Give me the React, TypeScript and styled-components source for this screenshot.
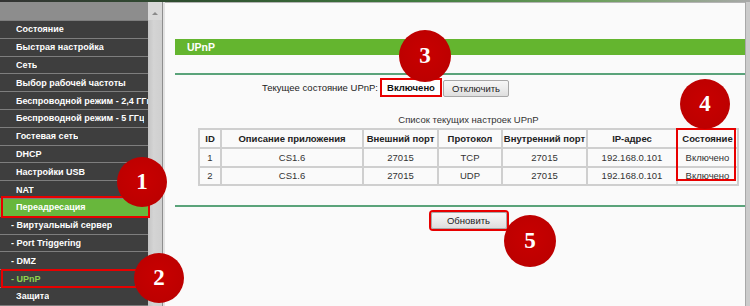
import React from "react";
import styled, { createGlobalStyle } from "styled-components";

const SANS = `"Liberation Sans", Arial, sans-serif`;
const SERIF = `"Liberation Serif", "Times New Roman", serif`;

const GlobalStyle = createGlobalStyle`
  html, body { margin: 0; padding: 0; background: #ffffff; }
  body { font-family: ${SANS}; }
  * { box-sizing: border-box; }
`;

const Page = styled.div`
  position: relative;
  width: 750px;
  height: 306px;
  overflow: hidden;
  display: flex;
  flex-direction: column;
  background: #fafafa;
`;

const TopStripe = styled.div`
  height: 2px;
  flex: none;
  background: linear-gradient(90deg, #333333 0%, #2f4f30 25%, #3f7a3e 55%, #6ea05f 80%, #a8a8a8 100%);
`;

const Body = styled.div`
  flex: 1;
  display: flex;
  min-height: 0;
`;

const Sidebar = styled.nav`
  width: 148px;
  flex: none;
  display: flex;
  flex-direction: column;
  background: #7c7c7c;
`;

const MenuHeader = styled.div`
  height: 18px;
  flex: none;
  background: #8d8d8d;
`;

const MenuItem = styled.div<{ $sub?: boolean; $active?: boolean; $current?: boolean; $mark?: "wide" | "narrow" }>`
  position: relative;
  height: 17.8px;
  flex: none;
  border-top: 1px solid #7e7e7e;
  display: flex;
  align-items: center;
  padding-left: ${(p) => (p.$sub ? "11px" : "16px")};
  background: ${(p) => (p.$active ? "#68b73c" : "#3e3e3e")};
  color: ${(p) => (p.$current ? "#8fd24c" : "#ffffff")};
  font: bold 9px ${SANS};
  white-space: nowrap;
  overflow: visible;

  &::after {
    content: "";
    display: ${(p) => (p.$mark ? "block" : "none")};
    position: absolute;
    left: 1px;
    right: ${(p) => (p.$mark === "wide" ? "-2px" : "11px")};
    top: ${(p) => (p.$mark === "wide" ? "-3px" : "-1px")};
    bottom: ${(p) => (p.$mark === "wide" ? "-2px" : "-1px")};
    border: 2px solid #e80000;
    z-index: 2;
  }
`;

const MenuLabel = styled.span`
  display: block;
  overflow: hidden;
  max-width: 132px;
`;

const ScrollTrack = styled.div`
  width: 14px;
  flex: none;
  background: linear-gradient(90deg, #c4c4c4 0%, #d4d4d4 40%, #cfcfcf 100%);
  display: flex;
  flex-direction: column;
`;

const ScrollButton = styled.div`
  height: 18px;
  display: flex;
  justify-content: center;
  padding-top: 10px;
  background: #d9d9d9;
  &::before {
    content: "";
    width: 0;
    height: 0;
    border-left: 3px solid transparent;
    border-right: 3px solid transparent;
    border-bottom: 3px solid #8a8a8a;
  }
`;

const Divider = styled.div`
  width: 3px;
  flex: none;
  border-left: 1px solid #8e8e8e;
  background: #e2e2e2;
`;

const Content = styled.main`
  flex: 1;
  min-width: 0;
  border-top: 1px solid #b4b4b4;
  padding-left: 10px;
  display: flex;
  flex-direction: column;
  background: #fafafa;
  color: #2a2a2a;
  font: 9.5px ${SANS};
`;

const RightEdge = styled.div`
  width: 5px;
  flex: none;
  border-left: 1px solid #a8a8a8;
  background: #cbcbcb;
`;

const TitleBar = styled.h1`
  margin: 36px 0 0;
  height: 16px;
  background: #64b52f;
  color: #ffffff;
  font: bold 10.5px ${SANS};
  line-height: 16px;
  padding-left: 12px;
`;

const Rule = styled.hr<{ $gap: number }>`
  margin: ${(p) => p.$gap}px 0 0;
  height: 2px;
  border: none;
  background: #5aa37a;
`;

const StatusRow = styled.div`
  margin-top: 3px;
  height: 19px;
  display: flex;
  align-items: center;
`;

const StatusLabel = styled.span`
  width: 203px;
  text-align: right;
  color: #222;
`;

const StatusValue = styled.span`
  margin-left: 2px;
  width: 62px;
  height: 19px;
  border: 2px solid #e80000;
  background: #ffffff;
  display: flex;
  align-items: center;
  justify-content: center;
  font-weight: bold;
  color: #111;
`;

const Button = styled.button<{ $w: number; $mark?: boolean }>`
  width: ${(p) => p.$w}px;
  height: 17px;
  padding: 0;
  margin: 0;
  border: 1px solid #a7a7a7;
  border-radius: 2px;
  background: linear-gradient(180deg, #f7f7f7 0%, #ececec 50%, #dedede 100%);
  font: 9.5px ${SANS};
  color: #222;
  box-shadow: ${(p) => (p.$mark ? "0 0 0 2px #e80000" : "none")};
`;

const StatusButtonSlot = styled.div`
  margin-left: 1px;
  padding-top: 2px;
  display: flex;
`;

const TableArea = styled.section`
  padding-left: 17px;
  display: flex;
  flex-direction: column;
  align-items: center;
`;

const Caption = styled.div`
  margin-top: 17px;
  height: 12px;
  line-height: 12px;
  color: #333;
`;

const TableWrap = styled.div`
  position: relative;
  margin-top: 2px;
`;

const Table = styled.table`
  width: 539px;
  table-layout: fixed;
  border-collapse: collapse;
  border: 2px solid #cfcfcf;
  font: 9.5px ${SANS};
  color: #333;
`;

const HeadCell = styled.th`
  height: 19px;
  padding: 0;
  border: 2px solid #cfcfcf;
  font-weight: bold;
  text-align: center;
  color: #222;
`;

const Cell = styled.td`
  height: 18.5px;
  padding: 0;
  border: 2px solid #cfcfcf;
  text-align: center;
`;

const ColumnMark = styled.div`
  position: absolute;
  left: 478px;
  top: 0;
  width: 60px;
  height: 53px;
  border: 2px solid #e80000;
  pointer-events: none;
`;

const RefreshRow = styled.div`
  margin-top: 5px;
  display: flex;
  justify-content: center;
  padding-left: 17px;
`;

const Badge = styled.div<{ $x: number; $y: number; $r: number }>`
  position: absolute;
  left: ${(p) => p.$x - p.$r}px;
  top: ${(p) => p.$y - p.$r}px;
  width: ${(p) => p.$r * 2}px;
  height: ${(p) => p.$r * 2}px;
  border-radius: 50%;
  background: radial-gradient(circle at 50% 45%, #c80000 0%, #bd0000 70%, #a80000 100%);
  color: #ffffff;
  font: bold 23px ${SERIF};
  display: flex;
  align-items: center;
  justify-content: center;
  z-index: 5;
`;

type Item = { label: string; sub?: boolean; active?: boolean; current?: boolean; mark?: "wide" | "narrow" };

const menu: Item[] = [
  { label: "Состояние" },
  { label: "Быстрая настройка" },
  { label: "Сеть" },
  { label: "Выбор рабочей частоты" },
  { label: "Беспроводной режим - 2,4 ГГц" },
  { label: "Беспроводной режим - 5 ГГц" },
  { label: "Гостевая сеть" },
  { label: "DHCP" },
  { label: "Настройки USB" },
  { label: "NAT" },
  { label: "Переадресация", active: true, mark: "wide" },
  { label: "- Виртуальный сервер", sub: true },
  { label: "- Port Triggering", sub: true },
  { label: "- DMZ", sub: true },
  { label: "- UPnP", sub: true, current: true, mark: "narrow" },
  { label: "Защита" },
];

const columns: { title: string; width: number }[] = [
  { title: "ID", width: 22 },
  { title: "Описание приложения", width: 142 },
  { title: "Внешний порт", width: 75 },
  { title: "Протокол", width: 64 },
  { title: "Внутренний порт", width: 85 },
  { title: "IP-адрес", width: 90 },
  { title: "Состояние", width: 61 },
];

const rows = [
  ["1", "CS1.6", "27015", "TCP", "27015", "192.168.0.101", "Включено"],
  ["2", "CS1.6", "27015", "UDP", "27015", "192.168.0.101", "Включено"],
];

const badges = [
  { n: "1", x: 142, y: 182, r: 25 },
  { n: "2", x: 159, y: 278, r: 25 },
  { n: "3", x: 425, y: 56, r: 26 },
  { n: "4", x: 705, y: 104, r: 25 },
  { n: "5", x: 530, y: 241, r: 26 },
];

export default function App() {
  return (
    <>
      <GlobalStyle />
      <Page>
        <TopStripe />
        <Body>
          <Sidebar>
            <MenuHeader />
            {menu.map((m) => (
              <MenuItem key={m.label} $sub={m.sub} $active={m.active} $current={m.current} $mark={m.mark}>
                <MenuLabel>{m.label}</MenuLabel>
              </MenuItem>
            ))}
          </Sidebar>
          <ScrollTrack>
            <ScrollButton />
          </ScrollTrack>
          <Divider />
          <Content>
            <TitleBar>UPnP</TitleBar>
            <Rule $gap={18} />
            <StatusRow>
              <StatusLabel>Текущее состояние UPnP:</StatusLabel>
              <StatusValue>Включено</StatusValue>
              <StatusButtonSlot>
                <Button $w={66}>Отключить</Button>
              </StatusButtonSlot>
            </StatusRow>
            <TableArea>
              <Caption>Список текущих настроек UPnP</Caption>
              <TableWrap>
                <Table>
                  <colgroup>
                    {columns.map((c) => (
                      <col key={c.title} style={{ width: c.width }} />
                    ))}
                  </colgroup>
                  <thead>
                    <tr>
                      {columns.map((c) => (
                        <HeadCell key={c.title}>{c.title}</HeadCell>
                      ))}
                    </tr>
                  </thead>
                  <tbody>
                    {rows.map((r) => (
                      <tr key={r[0]}>
                        {r.map((v, i) => (
                          <Cell key={i}>{v}</Cell>
                        ))}
                      </tr>
                    ))}
                  </tbody>
                </Table>
                <ColumnMark />
              </TableWrap>
            </TableArea>
            <Rule $gap={19} />
            <RefreshRow>
              <Button $w={76} $mark>
                Обновить
              </Button>
            </RefreshRow>
          </Content>
          <RightEdge />
        </Body>
        {badges.map((b) => (
          <Badge key={b.n} $x={b.x} $y={b.y} $r={b.r}>
            {b.n}
          </Badge>
        ))}
      </Page>
    </>
  );
}
